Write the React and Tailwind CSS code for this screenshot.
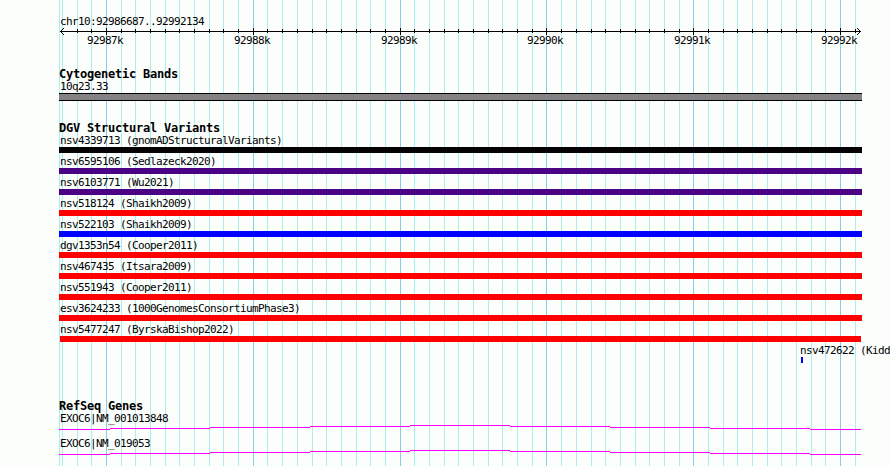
import React from 'react';

const MAJOR = [106, 253, 400, 546, 693, 840];

const MINOR = [
  59, 62, 77, 91, 121, 135, 150, 165, 179, 194, 209, 223, 238, 267, 282, 297, 312, 326, 341, 356,
  370, 385, 414, 429, 444, 458, 473, 488, 502, 517, 532, 561, 576, 591, 605, 620, 635, 649, 664,
  679, 708, 723, 737, 752, 767, 781, 796, 811, 825, 855,
];

const VARIANTS = [
  { name: 'nsv4339713 (gnomADStructuralVariants)', bar: 'w-[803px] bg-[#040204]' },
  { name: 'nsv6595106 (Sedlazeck2020)', bar: 'w-[803px] bg-[#4c0284]' },
  { name: 'nsv6103771 (Wu2021)', bar: 'w-[803px] bg-[#4c0284]' },
  { name: 'nsv518124 (Shaikh2009)', bar: 'w-[803px] bg-[#ff0000]' },
  { name: 'nsv522103 (Shaikh2009)', bar: 'w-[803px] bg-[#0000ff]' },
  { name: 'dgv1353n54 (Cooper2011)', bar: 'w-[803px] bg-[#ff0000]' },
  { name: 'nsv467435 (Itsara2009)', bar: 'w-[803px] bg-[#ff0000]' },
  { name: 'nsv551943 (Cooper2011)', bar: 'w-[803px] bg-[#ff0000]' },
  { name: 'esv3624233 (1000GenomesConsortiumPhase3)', bar: 'w-[803px] bg-[#ff0000]' },
  { name: 'nsv5477247 (ByrskaBishop2022)', bar: 'ml-px w-[801px] bg-[#ff0000]' },
];

const GENES = ['EXOC6|NM_001013848', 'EXOC6|NM_019053'];

// x start, width, y of every step of a gene's intron line
const STEPS = [
  [0, 51, 4],
  [51, 100, 3],
  [151, 100, 2],
  [251, 100, 1],
  [351, 100, 0],
  [451, 100, 1],
  [551, 100, 2],
  [651, 100, 3],
  [751, 51, 4],
];

const Heading = ({ children }) => (
  <h2 className="h-[13px] text-[12px] leading-[15px] font-bold tracking-[-0.224px] whitespace-pre">
    {children}
  </h2>
);

const Label = ({ children }) => (
  <div className="ml-px h-[13px] text-[11px] leading-[13px] tracking-[-0.623px] whitespace-pre">
    {children}
  </div>
);

const Grid = () => (
  <svg className="absolute inset-0" width="890" height="466" shapeRendering="crispEdges">
    {MINOR.map((x) => (
      <rect key={x} x={x} y="0" width="1" height="466" fill="#aceeec" />
    ))}
    {MAJOR.map((x) => (
      <rect key={x} x={x} y="0" width="1" height="466" fill="#84ceec" />
    ))}
  </svg>
);

const Ruler = () => (
  <svg className="block" width="831" height="20" viewBox="59 28 831 20">
    <g shapeRendering="crispEdges">
      <rect x="60" y="31" width="801" height="1" />
      {MINOR.filter((x) => x > 62).map((x) => (
        <rect key={x} x={x} y="29" width="1" height="4" />
      ))}
      {MAJOR.map((x) => (
        <rect key={x} x={x} y="28" width="1" height="7" />
      ))}
      {/* arrow heads */}
      {[1, 2, 3].map((d) => (
        <g key={d}>
          <rect x={60 + d} y={31 - d} width="1" height="1" />
          <rect x={60 + d} y={31 + d} width="1" height="1" />
          <rect x={860 - d} y={31 - d} width="1" height="1" />
          <rect x={860 - d} y={31 + d} width="1" height="1" />
        </g>
      ))}
    </g>
    {MAJOR.map((x, i) => (
      <text key={x} x={x - 19} y="44" className="text-[11px] tracking-[-0.623px]">
        {92987 + i}k
      </text>
    ))}
  </svg>
);

const Gene = ({ name }) => (
  <div>
    <Label>{name}</Label>
    <svg className="block" width="803" height="5" shapeRendering="crispEdges">
      {STEPS.map(([x, w, y]) => (
        <rect key={x} x={x} y={y} width={w} height="1" fill="#ff00ff" />
      ))}
    </svg>
  </div>
);

const App = () => (
  <div className="relative h-[466px] w-[890px] overflow-hidden bg-[#fcfefc] font-['DejaVu_Sans_Mono',monospace] text-black">
    <Grid />
    <main className="relative flex flex-col pt-[15px] pl-[59px]">
      <Label>chr10:92986687..92992134</Label>
      <Ruler />

      <section className="mt-[19px]">
        <Heading>Cytogenetic Bands</Heading>
        <Label>10q23.33</Label>
        <div className="h-2 w-[803px] border-y border-black bg-[#848284]" />
      </section>

      <section className="mt-5">
        <Heading>DGV Structural Variants</Heading>
        <div className="flex flex-col gap-[2px]">
          {VARIANTS.map(({ name, bar }) => (
            <div key={name}>
              <Label>{name}</Label>
              <div className={`h-[6px] ${bar}`} />
            </div>
          ))}
          <div className="pl-[740px]">
            <Label>nsv472622 (Kidd</Label>
            <div className="ml-[2px] h-[6px] w-[2px] bg-[#0000ff]" />
          </div>
        </div>
      </section>

      <section className="mt-9">
        <Heading>RefSeq Genes</Heading>
        <div className="flex flex-col gap-[7px]">
          {GENES.map((name) => (
            <Gene key={name} name={name} />
          ))}
        </div>
      </section>
    </main>
  </div>
);

export default App;
